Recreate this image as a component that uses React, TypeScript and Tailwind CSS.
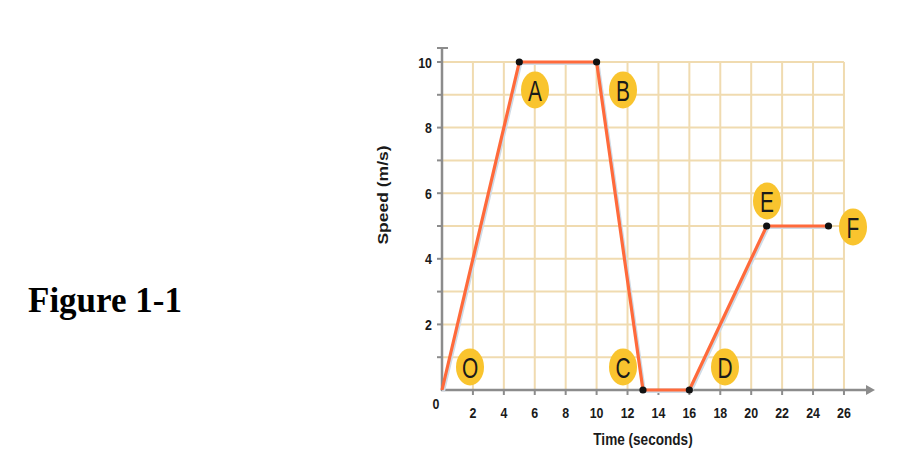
const X0 = 442;
const Y0 = 390;
const SX = 15.46;
const SY = 32.8;
const px = (t: number) => X0 + t * SX;
const py = (v: number) => Y0 - v * SY;

const sans = "'Liberation Sans', Arial, sans-serif";

const path = [
  [0, 0],
  [5, 10],
  [10, 10],
  [13, 0],
  [16, 0],
  [21, 5],
  [25, 5],
];

const dots = path.slice(1);

const markers = [
  { l: "O", x: 470, y: 367 },
  { l: "A", x: 535, y: 90 },
  { l: "B", x: 623, y: 90 },
  { l: "C", x: 623, y: 367 },
  { l: "D", x: 725, y: 367 },
  { l: "E", x: 767, y: 201 },
  { l: "F", x: 853, y: 227 },
];

// the source figure is squeezed sideways, so text is drawn narrow
function NarrowText({
  x,
  y,
  size,
  bold,
  squeeze = 0.8,
  anchor = "middle",
  children,
}: {
  x: number;
  y: number;
  size: number;
  bold?: boolean;
  squeeze?: number;
  anchor?: "start" | "middle" | "end";
  children: React.ReactNode;
}) {
  return (
    <text
      x={0}
      y={0}
      transform={`translate(${x} ${y}) scale(${squeeze} 1)`}
      textAnchor={anchor}
      fontSize={size}
      fontWeight={bold ? 700 : 400}
      fill="#1a1a1a"
    >
      {children}
    </text>
  );
}

function SpeedChart() {
  const xs = Array.from({ length: 13 }, (_, i) => (i + 1) * 2);
  const ys = Array.from({ length: 10 }, (_, i) => i + 1);
  const pts = path.map(([t, v]) => `${px(t)},${py(v)}`).join(" ");

  return (
    <svg
      viewBox="360 0 564 468"
      width={564}
      height={468}
      className="block shrink-0"
      style={{ fontFamily: sans }}
    >
      {/* grid */}
      {xs.map((t) => (
        <line key={`gx${t}`} x1={px(t)} y1={py(10)} x2={px(t)} y2={Y0} stroke="#f0dbb0" strokeWidth={2} />
      ))}
      {ys.map((v) => (
        <line key={`gy${v}`} x1={X0} y1={py(v)} x2={px(26)} y2={py(v)} stroke="#f0dbb0" strokeWidth={2} />
      ))}

      {/* axes */}
      <line x1={X0} y1={47} x2={X0} y2={Y0 + 1} stroke="#8c8c8c" strokeWidth={2.5} />
      <line x1={437} y1={48} x2={448} y2={48} stroke="#8c8c8c" strokeWidth={2} />
      <line x1={X0 - 1} y1={Y0} x2={868} y2={Y0} stroke="#8c8c8c" strokeWidth={2.5} />
      <path d="M866 385 L875 390 L866 395 Z" fill="#8c8c8c" />
      {xs.map((t) => (
        <line key={`tx${t}`} x1={px(t)} y1={Y0} x2={px(t)} y2={Y0 + 5} stroke="#8c8c8c" strokeWidth={2} />
      ))}
      {ys.map((v) => (
        <line key={`ty${v}`} x1={X0 - 5} y1={py(v)} x2={X0} y2={py(v)} stroke="#8c8c8c" strokeWidth={2} />
      ))}

      {/* tick labels */}
      {xs.map((t) => (
        <NarrowText key={`lx${t}`} x={px(t)} y={418} size={15.5} bold>
          {t}
        </NarrowText>
      ))}
      {[2, 4, 6, 8, 10].map((v) => (
        <NarrowText key={`ly${v}`} x={432} y={py(v) + 5.5} size={15.5} bold anchor="end">
          {v}
        </NarrowText>
      ))}
      <NarrowText x={436} y={409} size={15.5} bold>
        0
      </NarrowText>

      {/* axis titles */}
      <NarrowText x={643} y={445} size={17} bold>
        Time (seconds)
      </NarrowText>
      <text
        x={0}
        y={0}
        transform="translate(388 195) rotate(-90) scale(1.25 1)"
        textAnchor="middle"
        fontSize={14}
        fontWeight={700}
        fill="#1a1a1a"
      >
        Speed (m/s)
      </text>

      {/* motion line */}
      <polyline
        points={pts}
        fill="none"
        stroke="#cfdbe6"
        strokeWidth={3}
        transform="translate(1.5 1.5)"
        strokeLinejoin="round"
      />
      <polyline points={pts} fill="none" stroke="#ff6a3b" strokeWidth={3.2} strokeLinejoin="round" />
      {dots.map(([t, v]) => (
        <circle key={`d${t}`} cx={px(t)} cy={py(v)} r={3.6} fill="#111" />
      ))}

      {/* point markers */}
      {markers.map((m) => (
        <g key={m.l}>
          <ellipse cx={m.x} cy={m.y} rx={14} ry={18.5} fill="#f9c42e" />
          <NarrowText x={m.x} y={m.y + 10.5} size={29} squeeze={0.72}>
            {m.l}
          </NarrowText>
        </g>
      ))}
    </svg>
  );
}

export default function App() {
  return (
    <div className="w-[924px] h-[468px] bg-white flex overflow-hidden">
      <div className="w-[360px] shrink-0 pl-[28px] pt-[283px]">
        <h1 className="text-[35px] leading-none font-bold text-black font-['Liberation_Serif','Times_New_Roman',serif]">
          Figure 1-1
        </h1>
      </div>
      <SpeedChart />
    </div>
  );
}
